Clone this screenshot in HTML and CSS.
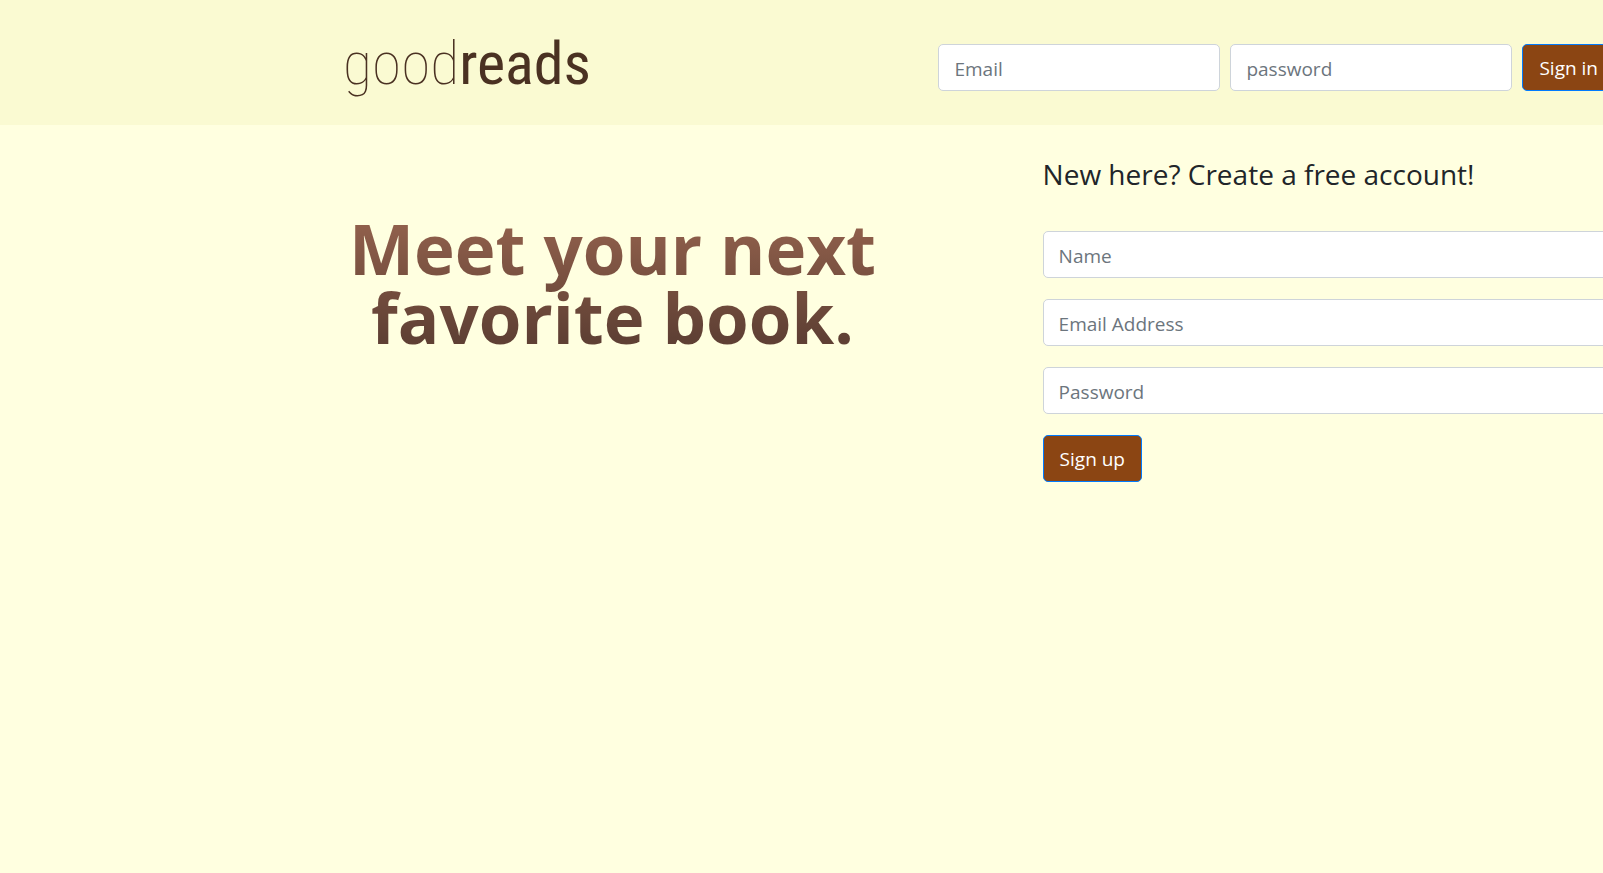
FILE: index.html
```html
<!DOCTYPE html>
<html lang="en">
<head>
<meta charset="utf-8">
<title>Goodreads</title>
<link rel="stylesheet" href="styles.css">
</head>
<body>
<header class="site-header">
  <div class="container header-row">
    <a class="logo" href="#" aria-label="goodreads"><span class="logo-thin">good</span><span class="logo-bold">reads</span></a>
    <form class="signin">
      <input class="field" type="email" placeholder="Email" aria-label="Email">
      <input class="field" type="password" placeholder="password" aria-label="password">
      <button class="btn" type="button">Sign in</button>
    </form>
  </div>
</header>
<main class="container main-row">
  <h1 class="headline">Meet your next<br>favorite book.</h1>
  <section class="signup">
    <h2 class="signup-title">New here? Create a free account!</h2>
    <form class="signup-form">
      <input class="field" type="text" placeholder="Name" aria-label="Name">
      <input class="field" type="email" placeholder="Email Address" aria-label="Email Address">
      <input class="field" type="password" placeholder="Password" aria-label="Password">
      <button class="btn" type="button">Sign up</button>
    </form>
  </section>
</main>
</body>
</html>
```
FILE: styles.css
```css
* {
  box-sizing: border-box;
}

body {
  margin: 0;
  min-height: 100vh;
  overflow-x: hidden;
  background: #ffffe0;
  color: #212529;
  font-family: "Segoe UI", "Open Sans", "Noto Sans", sans-serif;
  font-size: 19px;
  line-height: 29px;
}

.container {
  width: calc(100% - 331px);
  margin-left: 343px;
}

.site-header {
  background: #fafad2;
}

.header-row {
  display: flex;
  justify-content: space-between;
  align-items: flex-start;
  padding: 24px 0 21px;
}

.logo {
  display: flex;
  align-items: baseline;
  color: #4a3122;
  font-family: "Roboto Condensed", Roboto, sans-serif;
  font-size: 60px;
  line-height: 80px;
  text-decoration: none;
}

.logo-thin {
  font-weight: 100;
}

.signin {
  display: flex;
  gap: 10px;
  padding-top: 20px;
}

.signin .field {
  width: 282px;
}

.field {
  width: 100%;
  height: 47px;
  padding: 9px 15px 7px;
  border: 1px solid #ced4da;
  border-radius: 5px;
  background: #fff;
  color: #495057;
  font: inherit;
}

.field::placeholder {
  color: #6c757d;
  opacity: 1;
}

.btn {
  height: 47px;
  padding: 9px 16px 7px;
  border: 1px solid #007bff;
  border-radius: 5px;
  background: #8b4513;
  color: #fff;
  font: inherit;
  white-space: nowrap;
}

.main-row {
  display: grid;
  grid-template-columns: 55% 45%;
  align-items: start;
}

.headline {
  justify-self: start;
  margin: 89px 0 0 6px;
  background: linear-gradient(#8f5f4b 10%, #5f4034 90%);
  background-clip: text;
  -webkit-background-clip: text;
  color: transparent;
  font-family: "Open Sans", "Noto Sans", sans-serif;
  font-size: 69px;
  font-weight: 700;
  line-height: 69px;
  text-align: center;
  white-space: nowrap;
}

.signup-title {
  margin: 31px 0 39px;
  font-size: 28px;
  font-weight: 400;
  line-height: 36px;
}

.signup-form {
  display: flex;
  flex-direction: column;
  align-items: flex-start;
  gap: 21px;
}
```
